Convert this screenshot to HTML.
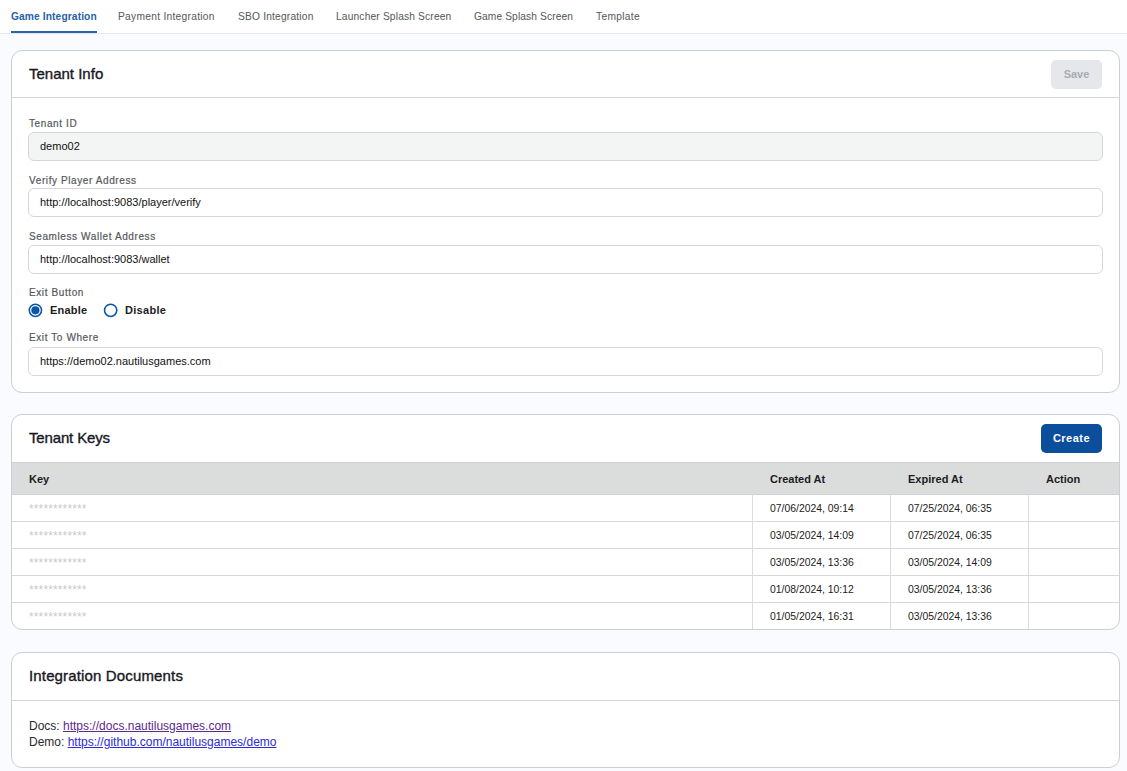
<!DOCTYPE html>
<html>
<head>
<meta charset="utf-8">
<style>
*{box-sizing:border-box;margin:0;padding:0}
html,body{width:1127px;height:771px;overflow:hidden}
body{background:#fafbfe;font-family:"Liberation Sans",sans-serif;position:relative;color:#1a1a1f}
.abs{position:absolute;white-space:nowrap}
.tabs{position:absolute;left:0;top:0;width:1127px;height:34px;background:#fff;border-bottom:1px solid #e6e8eb}
.tab{position:absolute;top:11px;font-size:10.2px;line-height:12px;color:#575b60;-webkit-text-stroke:0.05px #575b60}
.tab.active{color:#2562aa;font-weight:bold;-webkit-text-stroke:0}
.uline{position:absolute;left:11px;top:31px;width:86px;height:2px;background:#2865ac}
.card{position:absolute;left:11px;width:1109px;background:#fff;border:1px solid #cbcfd3;border-radius:11px;overflow:hidden}
.chead{position:absolute;left:0;top:0;width:100%;border-bottom:1px solid #d2d4d8}
.ctitle{position:absolute;left:17px;font-size:15px;line-height:18px;color:#18181e;-webkit-text-stroke:0.35px #18181e}
.btn{position:absolute;border-radius:5px;font-weight:bold;font-size:11px;line-height:28px;text-align:center}
.label{position:absolute;left:17px;font-size:10px;line-height:12px;color:#55585d;letter-spacing:0.6px;-webkit-text-stroke:0.2px #55585d}
.input{position:absolute;left:16px;width:1075px;height:29px;border:1px solid #d3d7dc;border-radius:6px;background:#fff}
.input span{position:absolute;left:11px;top:7px;font-size:11px;line-height:13px;color:#111}
.radio{position:absolute;width:14px;height:14px;border-radius:50%;border:1.6px solid #1f5ea8;background:#fff}
.radio.on::after{content:"";position:absolute;left:2px;top:2px;width:7px;height:7px;border-radius:50%;background:#0b55a6}
.rlabel{position:absolute;font-size:11px;line-height:13px;font-weight:bold;color:#1c1c22;letter-spacing:0.3px}
.thead{position:absolute;left:0;top:47px;width:100%;height:33px;background:#dbdcdc;border-top:1px solid #cfd2d6;border-bottom:1px solid #cfd2d6}
.th{position:absolute;font-size:11px;line-height:13px;font-weight:bold;color:#1c1c22;top:10px}
.row{position:absolute;left:0;width:100%;height:27px;border-bottom:1px solid #d5d9de}
.vline{position:absolute;top:47px;width:1px;height:167px;background:#d9dde2}
.stars{position:absolute;left:17px;font-size:12px;line-height:14px;color:#cbcbcb;top:7px;letter-spacing:0.13px}
.date{position:absolute;font-size:10.4px;line-height:12px;color:#1c1c22;top:8px}
.doc{position:absolute;left:17px;font-size:12px;line-height:16px;color:#2a2a2e}
.doc a{text-decoration:underline}
</style>
</head>
<body>
<div class="tabs">
  <div class="tab active" style="left:11px;letter-spacing:0.128px">Game Integration</div>
  <div class="tab" style="left:118px;letter-spacing:0.295px">Payment Integration</div>
  <div class="tab" style="left:238px;letter-spacing:0.202px">SBO Integration</div>
  <div class="tab" style="left:336px;letter-spacing:0.176px">Launcher Splash Screen</div>
  <div class="tab" style="left:474px;letter-spacing:0.121px">Game Splash Screen</div>
  <div class="tab" style="left:596px;letter-spacing:0.33px">Template</div>
  <div class="uline"></div>
</div>

<!-- Card 1 -->
<div class="card" style="top:50px;height:343px">
  <div class="chead" style="height:47px"></div>
  <div class="ctitle" style="top:14px">Tenant Info</div>
  <div class="btn" style="left:1039px;top:9px;width:51px;height:28.5px;background:#e5e7ea;color:#a8acb2">Save</div>

  <div class="label" style="top:67px">Tenant ID</div>
  <div class="input" style="top:81px;background:#f3f4f4"><span>demo02</span></div>

  <div class="label" style="top:124px">Verify Player Address</div>
  <div class="input" style="top:137px"><span>http://localhost:9083/player/verify</span></div>

  <div class="label" style="top:180px">Seamless Wallet Address</div>
  <div class="input" style="top:194px"><span>http://localhost:9083/wallet</span></div>

  <div class="label" style="top:236px">Exit Button</div>
  
  <div class="rlabel" style="left:38px;top:253px;letter-spacing:0.2px">Enable</div>
  
  <div class="rlabel" style="left:113px;top:253px">Disable</div>

  <div class="label" style="top:281px">Exit To Where</div>
  <div class="input" style="top:296px"><span>https://demo02.nautilusgames.com</span></div>
</div>

<!-- Card 2 -->
<div class="card" style="top:414px;height:216px">
  <div class="ctitle" style="top:14px;letter-spacing:-0.15px">Tenant Keys</div>
  <div class="btn" style="left:1029px;top:9px;width:61px;height:28.5px;background:#0b4f9c;color:#fff;letter-spacing:0.5px">Create</div>
  <div class="thead">
    <div class="th" style="left:17px">Key</div>
    <div class="th" style="left:758px">Created At</div>
    <div class="th" style="left:896px">Expired At</div>
    <div class="th" style="left:1034px">Action</div>
  </div>
  <div class="row" style="top:80px"><div class="stars">************</div><div class="date" style="left:758px">07/06/2024, 09:14</div><div class="date" style="left:896px">07/25/2024, 06:35</div></div>
  <div class="row" style="top:107px"><div class="stars">************</div><div class="date" style="left:758px">03/05/2024, 14:09</div><div class="date" style="left:896px">07/25/2024, 06:35</div></div>
  <div class="row" style="top:134px"><div class="stars">************</div><div class="date" style="left:758px">03/05/2024, 13:36</div><div class="date" style="left:896px">03/05/2024, 14:09</div></div>
  <div class="row" style="top:161px"><div class="stars">************</div><div class="date" style="left:758px">01/08/2024, 10:12</div><div class="date" style="left:896px">03/05/2024, 13:36</div></div>
  <div class="row" style="top:188px;border-bottom:none"><div class="stars">************</div><div class="date" style="left:758px">01/05/2024, 16:31</div><div class="date" style="left:896px">03/05/2024, 13:36</div></div>
  <div class="vline" style="left:740px"></div>
  <div class="vline" style="left:878px"></div>
  <div class="vline" style="left:1016px"></div>
</div>

<!-- Card 3 -->
<div class="card" style="top:652px;height:116px">
  <div class="chead" style="height:48px"></div>
  <div class="ctitle" style="top:14px;letter-spacing:0.15px">Integration Documents</div>
  <div class="doc" style="top:65px">Docs: <a style="color:#5a2a8c">https://docs.nautilusgames.com</a></div>
  <div class="doc" style="top:81px">Demo: <a style="color:#2b2bd9">https://github.com/nautilusgames/demo</a></div>
</div>
<svg class="abs" style="left:25px;top:300px" width="22" height="20" viewBox="0 0 22 20"><circle cx="10.4" cy="10.3" r="6.15" fill="#fff" stroke="#0b55a5" stroke-width="1.55"/><circle cx="10.4" cy="10.3" r="4.1" fill="#0b55a5"/></svg>
<svg class="abs" style="left:100px;top:300px" width="22" height="20" viewBox="0 0 22 20"><circle cx="10.65" cy="10.3" r="6.15" fill="#fff" stroke="#0b55a5" stroke-width="1.55"/></svg>
</body>
</html>
